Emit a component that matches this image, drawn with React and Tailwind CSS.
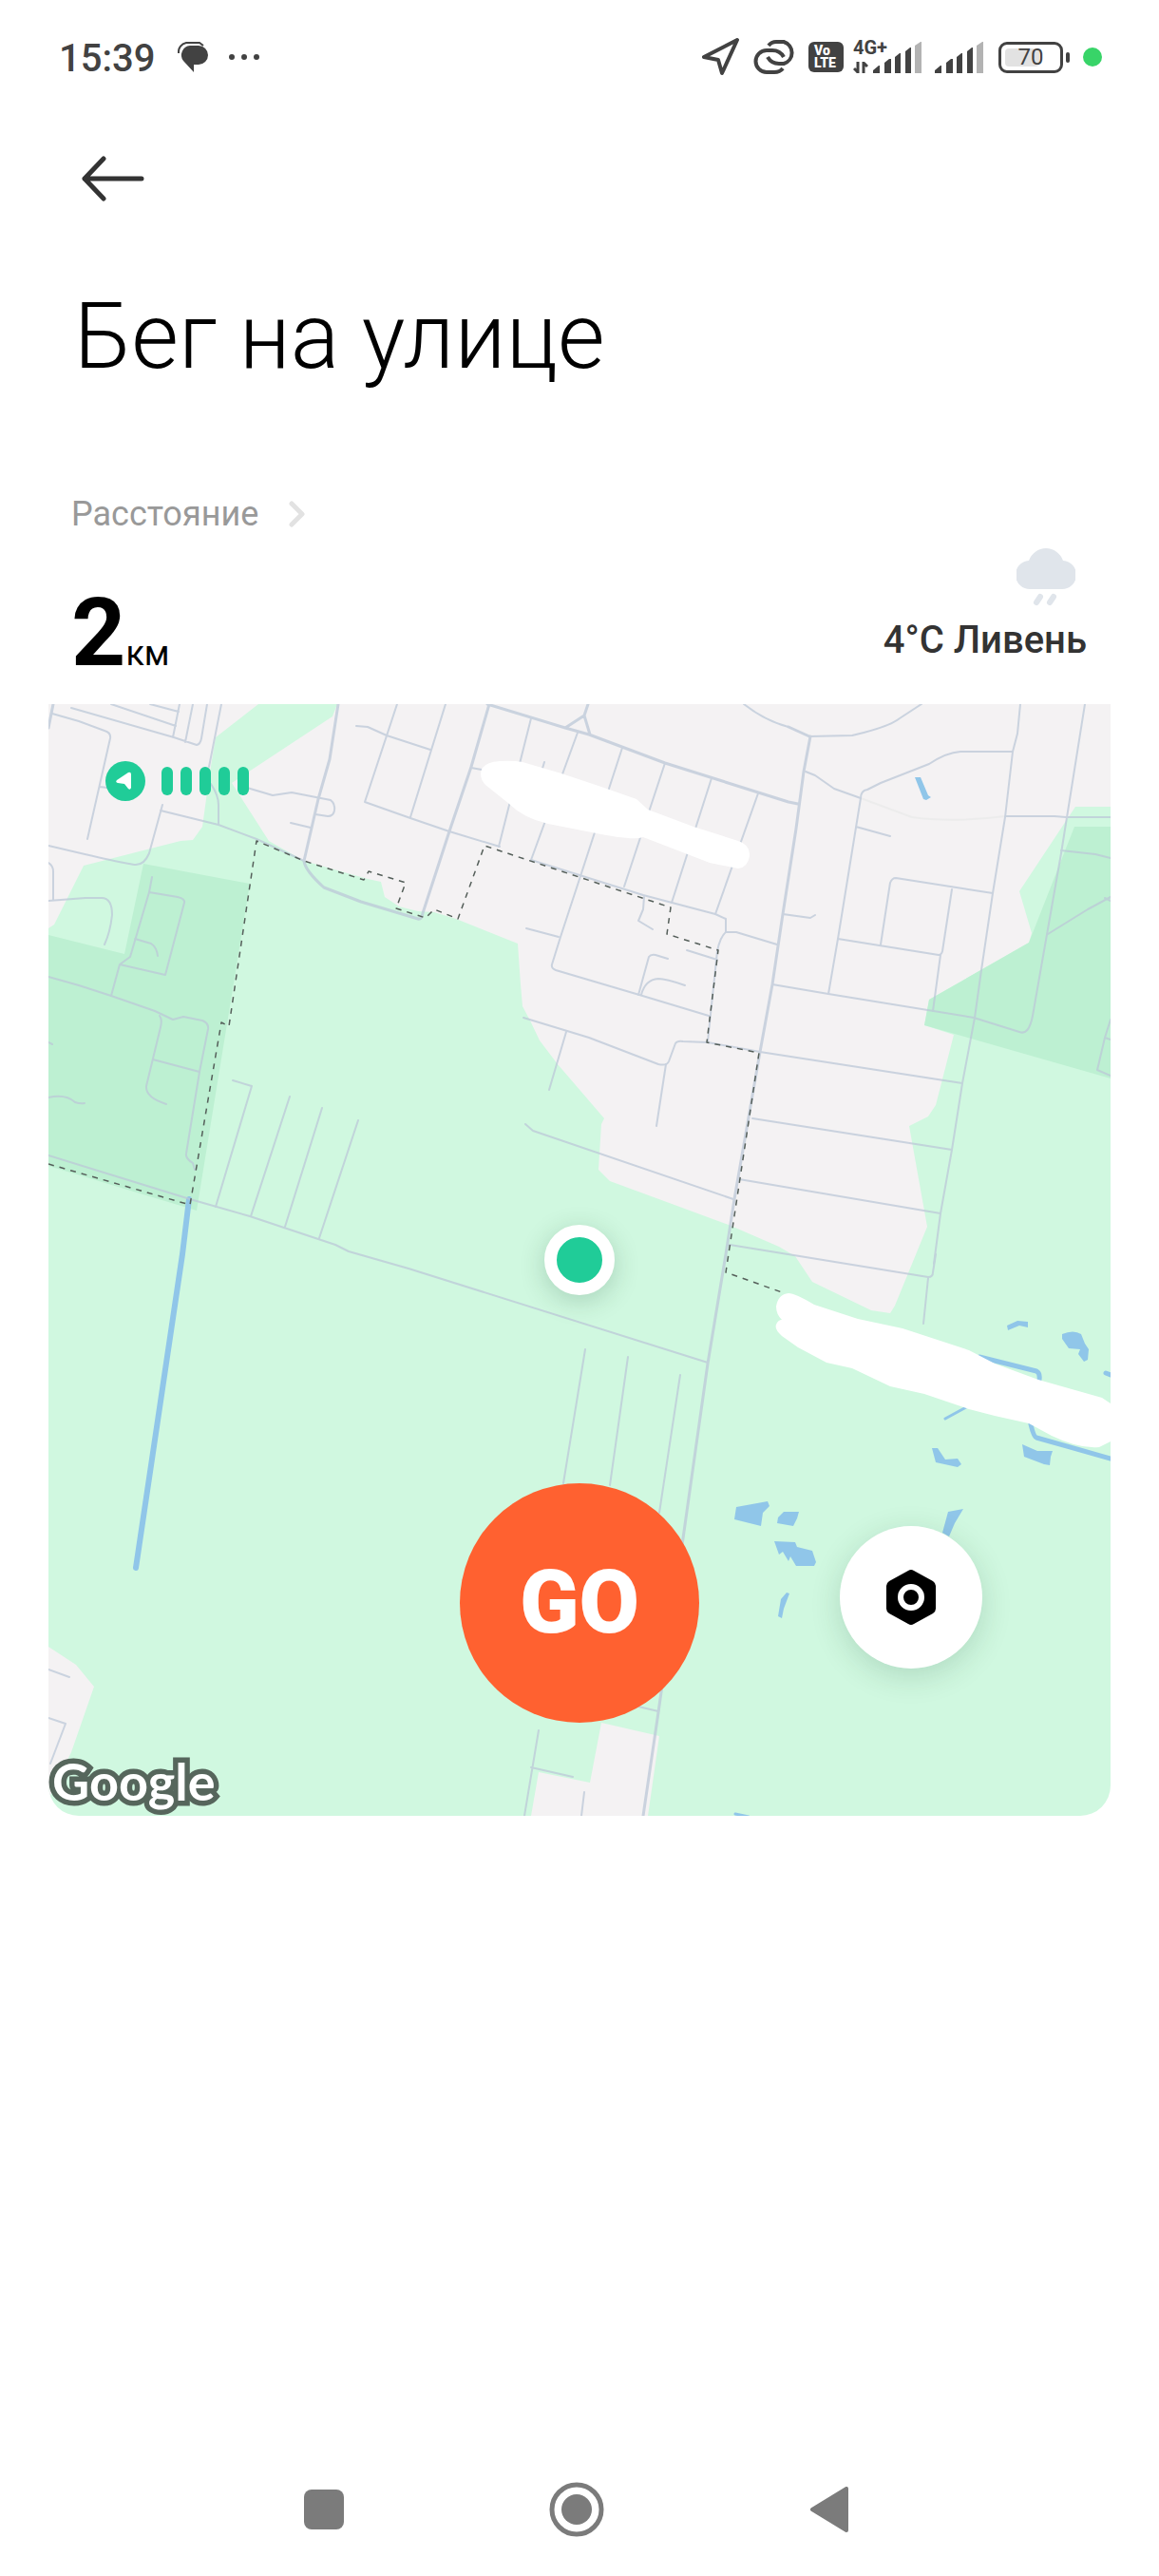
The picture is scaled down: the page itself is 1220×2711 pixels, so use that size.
import React from 'react';
import { clsx } from 'clsx';

const AREAS = {
    land: [
        'M0 0H221L176 35L169 77L166 100L162 129L152 143L139 144L37 170L6 232L0 236Z',
        'M304 0L299 13L211 71L193 83L232 144L269 165L336 184L350 187L354 203L369 213L389 218L406 219L429 226L494 252L497 295L499 318L507 333L517 354L536 379L585 436L582 442L579 490L591 502L716 548L769 571L786 581L804 608L866 638L886 641L891 633L925 550L906 444L926 434L934 422L953 348L922 338L927 311L1032 251L1035 241L1022 197L1071 123L1081 108H1118V0Z',
        'M0 992L29 1011L48 1034L24 1103L0 1153Z',
        'M582 1072L643 1086L631 1170H508L516 1124L570 1135Z',
    ],
    forest: [
        'M100 168L212 189L156 533L0 486V243L80 263Z',
        'M1118 129H1080L1032 251L927 311L922 338L1118 394Z',
    ],
    water: [
        'M912 77L918 77L926 96L929 98L924 101L921 100Z',
        'M1009 654L1020 649L1031 650V656L1022 654L1010 659Z',
        'M1067 663Q1079 658 1087 663L1091 673L1095 679L1094 690L1090 692L1084 684L1086 679L1074 678L1067 668Z',
        'M930 783L936 783L944 795L957 794L961 800L957 803L934 798Z',
        'M1025 779L1041 786L1057 786L1055 792L1054 801L1048 800L1027 792Z',
        'M724 845L757 839L759 844L752 851L750 865L722 858Z',
        'M774 850L790 850L788 857L784 865L767 862L768 856Z',
        'M764 881L786 882L788 887L804 891L808 903L806 907L787 907L781 897L779 902L773 892L769 895Z',
        'M777 935L780 936L774 952L772 962L768 960L771 942Z',
        'M947 850L963 847L954 862L948 876L941 872Z',
    ],
};

const STREETS = [
    'M4 10L32 18L59 28Q66 30 65 36L41 142M54 87L62 88',
    'M24 4L132 35L156 43Q160 42 161 36L167 0M66 0L134 23M107 0L137 8M138 0L131 35M152 0L144 40',
    'M182 0L169 66M171 84Q179 96 179 106V126M118 112L179 127L219 142L269 165',
    'M120 106L106 157Q101 169 92 169Q84 169 0 149M0 167Q5 170 5 176V206',
    'M0 207L39 204H56Q67 204 67 222Q65 240 59 253',
    'M109 182L106 198L86 266L75 274L66 307M106 198L136 203Q144 205 143 209L123 285L75 274M91 247L108 252Q114 256 115 265',
    'M0 287L32 296L66 307L112 323L131 332L142 329L162 333Q169 336 168 342L159 387L145 473Q144 478 152 483L154 490',
    'M117 328Q120 332 118 340L103 402Q102 414 124 421M110 374L159 387M0 356L4 358M0 414Q18 410 28 419Q34 421 38 420',
    'M0 475L149 521L212 539L302 569L316 576L379 594L694 693',
    'M194 396L214 402L176 529M254 413L213 539M288 425L249 550M326 438L285 562',
    'M209 88L236 96L256 93L297 101Q302 105 301 112Q300 118 294 118L281 116M255 125L276 130',
    'M324 23L336 24L356 33L402 48M367 0L333 103L381 120L422 134L475 150M418 0L381 119M445 67L456 69',
    'M508 15L474 150M557 30L508 164M522 61L519 71M604 46L561 178L539 245L530 274Q529 278 534 280L622 306L695 328',
    'M649 62L606 192M698 78L656 209M747 94L702 221',
    'M508 164L626 201L702 221L713 226V240Q707 245 704 260L694 355M713 240L724 240L767 253',
    'M627 203L626 216L621 228L636 237M503 236L537 245M672 259L704 269',
    'M621 306L632 266Q634 263 639 264L652 268M624 306Q628 290 642 289Q650 289 670 296',
    'M500 330L569 351L642 379Q651 381 653 376L660 357Q662 354 668 355L694 356L749 366',
    'M545 345L527 406M650 379L640 444M502 442L510 449L721 521',
    'M762 295L821 305L974 330L1022 345Q1032 349 1036 328L1066 157L1091 0',
    'M749 366L962 399M741 436L951 469M727 500L939 536M717 569L926 603Q931 603 931 598L934 579M926 604L921 652',
    'M732 0Q755 18 779 24M801 34L846 33Q885 24 896 15L919 0M797 71L807 75L827 89L855 99',
    'M1015 50H960Q945 51 927 63L876 83L862 90Q855 91 855 99L831 247L821 305M850 129L886 139M773 221L802 225L807 222',
    'M831 247L937 264Q940 264 941 260L951 195M939 264L931 323M876 253L886 188Q888 183 892 183L994 199',
    'M1008 118H1059L1071 119H1118M1066 154L1102 158L1118 162M1052 242L1094 216L1118 203M1112 204L1118 207',
    'M1118 332L1112 351L1104 385L1118 391M1112 351L1118 353',
    'M565 679L542 820M610 687L591 822M665 706L643 851M621 1055L642 1060',
    'M516 1080L501 1170M508 1119L552 1129M564 1145L561 1170M0 1016L22 1024M0 1067L18 1073L2 1115',
    'M1023 0L1020 31L1015 50L1007 119L994 199L982 280L975 330L962 399L951 469L939 536L932 589',
];

const AVENUES = [
    'M0 25L5 0',
    'M305 0L296 58L284 100L269 165Q270 175 290 193L329 208L389 226Q393 227 394 220L422 134L445 66L464 0',
    'M462 0L544 25L569 32L649 62L779 103L789 105M568 0L564 12L570 32M564 12L544 25M779 24L801 34',
    'M802 34L795 71L787 131L773 221L762 295L749 366L722 521L713 579L694 694L667 885L642 1061L626 1170',
];

const BORDER = 'M0 484L149 527L182 335L190 339L219 144L269 165L332 185L337 176L376 188L366 215L397 225L406 216L431 226L459 149L655 214L651 242L705 259L693 356L748 367L713 598L772 619';

const HIDDEN = [
    'M455 73Q456 61 475 60Q488 59 499 61L540 73L579 86L619 100L631 111L679 129L726 144Q739 148 738 160Q736 172 726 173L696 167L626 140Q615 144 572 135L526 126Q500 120 485 105L460 85Q455 80 455 73Z',
    'M766 634Q768 621 779 620Q786 620 806 632L852 647L899 657L969 680L996 694L1042 711L1109 730L1118 736V776L1106 782Q1085 784 1056 770L1032 757L996 749L969 742L922 726L886 718L846 699L819 693L789 677L772 665Q764 658 766 653Q768 648 772 648Q766 642 766 634Z',
];

const MapCanvas = () => (
    <svg viewBox="0 0 1118 1170" className="block w-full" fill="none" strokeLinecap="round" strokeLinejoin="round" aria-hidden="true">
        <rect width="1118" height="1170" fill="#d0f8e0" />
        {AREAS.land.map((d) => <path key={d} d={d} fill="#f4f2f3" />)}
        {AREAS.forest.map((d) => <path key={d} d={d} fill="#bdf0d2" />)}
        <path d="M855 99L909 119Q949 125 1007 118" stroke="#ececec" strokeWidth="2" />
        {AREAS.water.map((d) => <path key={d} d={d} fill="#90c6e9" />)}
        <g stroke="#90c6e9">
            <path d="M148 521L141 579L92 909" strokeWidth="6" />
            <path d="M980 687L1040 702Q1044 704 1043 711M1034 758Q1037 771 1040 772L1118 794M1113 704L1118 706" strokeWidth="5" />
            <path d="M944 752L966 740M723 1168L737 1171" strokeWidth="3" />
        </g>
        <g stroke="#bcc8d8" opacity="0.75">
            {STREETS.map((d) => <path key={d} d={d} strokeWidth="2" />)}
            {AVENUES.map((d) => <path key={d} d={d} strokeWidth="3" />)}
        </g>
        <path d={BORDER} stroke="#555f5a" strokeWidth="1.5" strokeDasharray="6 6" strokeLinecap="butt" />
        {HIDDEN.map((d) => <path key={d} d={d} fill="#fff" />)}
    </svg>
);

const SignalBars = () => (
    <svg width="51" height="33" viewBox="0 0 51 33" aria-hidden="true">
        <path d="M0 33V30L6 25H7V33ZM12 33V22L17 18H19V33ZM23 33V16L28 12H29V33ZM34 33V10L39 6H40V33Z" fill="#424242" />
        <path d="M44 33V4L50 0H51V33Z" fill="#b3b3b3" />
    </svg>
);

const StatusBar = () => (
    <div className="flex h-[120px] items-center justify-between pr-[60px] pl-[62px] text-[#424242]">
        <div className="flex items-center">
            <span className="pt-1 text-[40px] leading-10 font-medium">15:39</span>
            <svg width="33" height="32" viewBox="0 0 33 32" className="ml-6" fill="#424242" aria-hidden="true">
                <path d="M13 4H22A10 10 0 0 1 22 24H17V32L6 20A10 10 0 0 1 13 4Z" />
                <path d="M1 12A10 10 0 0 1 9 1H23L27 4" fill="none" stroke="#424242" strokeWidth="2" />
            </svg>
            <svg width="34" height="8" viewBox="0 0 34 8" className="ml-5" fill="#424242" aria-hidden="true">
                <circle cx="4" cy="4" r="3" />
                <circle cx="17" cy="4" r="3" />
                <circle cx="30" cy="4" r="3" />
            </svg>
        </div>
        <div className="flex items-center">
            <svg width="40" height="40" viewBox="0 0 40 40" fill="none" stroke="#424242" strokeWidth="4" strokeLinejoin="round" aria-hidden="true">
                <path d="M37 2L2 20L17 23L21 37Z" />
            </svg>
            <svg width="46" height="36" viewBox="0 0 46 36" className="ml-3.5" fill="none" stroke="#424242" strokeWidth="4" aria-hidden="true">
                <path d="M16 6Q19 2 24 2H32A12 12 0 0 1 32 25H27Q19 25 15 18" />
                <path d="M31 30Q28 34 22 34H14A11 11 0 0 1 14 11H20Q28 11 32 18" />
            </svg>
            <div className="ml-3 flex h-8 w-[37px] flex-col items-start justify-center rounded-md bg-[#424242] pl-1.5 text-[14px] leading-[13px] font-black text-white">
                <span>Vo</span>
                <span>LTE</span>
            </div>
            <div className="relative ml-2.5 flex items-end pl-[21px]">
                <span className="absolute -top-1 left-0 text-[20px] leading-5 font-bold">4G+</span>
                <svg width="16" height="12" viewBox="0 0 16 12" className="absolute bottom-0 left-0" fill="none" stroke="#424242" strokeWidth="3" aria-hidden="true">
                    <path d="M5 0V12M1 7L5 11M11 12V0M15 5L11 1" />
                </svg>
                <SignalBars />
            </div>
            <div className="ml-3.5">
                <SignalBars />
            </div>
            <div className="ml-4 flex items-center gap-[3px]">
                <div className="relative flex h-[33px] w-[68px] items-center justify-center rounded-[9px] border-[3px] border-[#424242]">
                    <div className="absolute top-1 left-1 h-[19px] w-9 rounded-sm bg-[#e2e2e2]" />
                    <span className="relative text-[24px] leading-6">70</span>
                </div>
                <div className="h-[11px] w-1 rounded-sm bg-[#424242]" />
            </div>
            <div className="ml-3.5 size-5 rounded-full bg-[#38d468]" />
        </div>
    </div>
);

const GpsBadge = () => (
    <div className="absolute top-[60px] left-[60px] flex items-center gap-[17px]">
        <svg width="42" height="42" viewBox="0 0 42 42" aria-hidden="true">
            <circle cx="21" cy="21" r="21" fill="#20cc98" />
            <path d="M12 20L24 12Q27 11 27 14V28Q26 31 24 29L20 24L13 23Q10 22 12 20Z" fill="#fff" />
        </svg>
        <div className="flex gap-2">
            {[1, 2, 3, 4, 5].map((bar) => (
                <div key={bar} className="h-[30px] w-3 rounded-full bg-[#20cc98]" />
            ))}
        </div>
    </div>
);

const NavButton = ({ label, children, className }) => (
    <button type="button" aria-label={label} className={clsx('flex size-[60px] items-center justify-center', className)}>
        {children}
    </button>
);

export default function App() {
    return (
        <div className="flex min-h-screen flex-col bg-white font-[Roboto,sans-serif] text-black">
            <StatusBar />

            {/* Header */}
            <header className="px-[78px]">
                <button type="button" aria-label="Назад" className="mt-10 flex h-14 w-20 items-center pl-2">
                    <svg width="66" height="48" viewBox="0 0 66 48" fill="none" stroke="#333" strokeWidth="5" strokeLinecap="round" strokeLinejoin="round" aria-hidden="true">
                        <path d="M23 3L3 24L23 45M3 24H63" />
                    </svg>
                </button>
                <h1 className="mt-[82px] text-[96px] leading-[112px] font-light">Бег на улице</h1>
            </header>

            {/* Goal and weather */}
            <section className="flex items-end justify-between pt-[109px] pr-[76px] pb-[15px] pl-[75px]">
                <div>
                    <button type="button" className="flex items-center gap-8 text-[36px] leading-[44px] text-[#999]">
                        Расстояние
                        <svg width="18" height="28" viewBox="0 0 18 28" fill="none" stroke="#e2e2e2" strokeWidth="5" strokeLinecap="round" strokeLinejoin="round" aria-hidden="true">
                            <path d="M3 3L14 14L3 25" />
                        </svg>
                    </button>
                    <p className="mt-[43px] flex items-baseline">
                        <span className="text-[100px] leading-[120px] font-bold">2</span>
                        <span className="text-[36px]">км</span>
                    </p>
                </div>
                <div className="flex flex-col items-end pb-7">
                    <svg width="62" height="62" viewBox="0 0 62 62" className="mr-3" fill="#e0e5eb" aria-hidden="true">
                        <path d="M15 44A15 15 0 0 1 13 14A19 19 0 0 1 49 14A15 15 0 0 1 47 44Z" />
                        <path d="M25 52L21 58M39 52L35 58" stroke="#e0e5eb" strokeWidth="6" strokeLinecap="round" />
                    </svg>
                    <span className="mt-3 text-[40px] leading-[48px] font-medium text-[#333]">4°C Ливень</span>
                </div>
            </section>

            {/* Map */}
            <main className="relative mx-[51px] overflow-hidden rounded-b-[32px]">
                <MapCanvas />
                <GpsBadge />

                <div className="absolute inset-0 flex items-center justify-center">
                    <div className="size-[74px] rounded-full border-[13px] border-white bg-[#20cc98] shadow-[0_6px_28px_rgba(0,60,30,0.2)]" />
                </div>

                <span className="absolute bottom-1.5 left-1 font-[Lato,sans-serif] text-[54px] leading-[60px] font-bold text-white [-webkit-text-stroke:11px_#56665c] [paint-order:stroke_fill]">
                    Google
                </span>

                <div className="absolute inset-x-0 bottom-[98px] flex justify-center">
                    <button type="button" className="size-[252px] rounded-full bg-[#ff6130] text-[92px] font-black text-white">
                        GO
                    </button>
                </div>

                <button
                    type="button"
                    aria-label="Настройки"
                    className="absolute right-[135px] bottom-[155px] flex size-[150px] items-center justify-center rounded-full bg-white shadow-[0_8px_32px_rgba(0,60,30,0.16)]"
                >
                    <svg width="52" height="58" viewBox="0 0 52 58" aria-hidden="true">
                        <path d="M23 1Q26 -1 29 1L49 12Q52 14 52 17V41Q52 44 49 46L29 57Q26 59 23 57L3 46Q0 44 0 41V17Q0 14 3 12Z" />
                        <circle cx="26" cy="29" r="11" fill="none" stroke="#fff" strokeWidth="6" />
                    </svg>
                </button>
            </main>

            {/* System navigation */}
            <nav className="mt-auto flex h-[140px] items-center justify-center gap-[206px] pr-1.5">
                <NavButton label="Недавние">
                    <div className="size-[42px] rounded-lg bg-[#7b7b7b]" />
                </NavButton>
                <NavButton label="Домой">
                    <svg width="58" height="58" viewBox="0 0 58 58" aria-hidden="true">
                        <circle cx="29" cy="29" r="26" fill="none" stroke="#7b7b7b" strokeWidth="5" />
                        <circle cx="29" cy="29" r="16" fill="#7b7b7b" />
                    </svg>
                </NavButton>
                <NavButton label="Назад">
                    <svg width="40" height="48" viewBox="0 0 40 48" fill="#7b7b7b" stroke="#7b7b7b" strokeWidth="4" strokeLinejoin="round" aria-hidden="true">
                        <path d="M2 24L38 2V46Z" />
                    </svg>
                </NavButton>
            </nav>
        </div>
    );
}
